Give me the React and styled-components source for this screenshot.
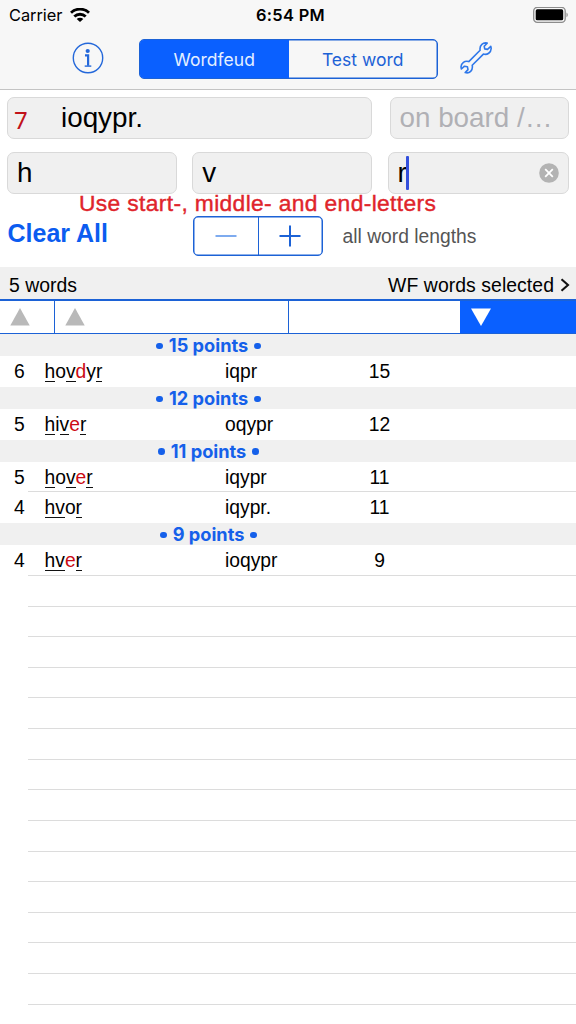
import React from "react";
import styled, { createGlobalStyle, css } from "styled-components";

const BLUE = "#0a60ff";
const LINE = "#1c62d6";

const GlobalStyle = createGlobalStyle`
  * { box-sizing: border-box; }
  body { margin: 0; background: #fff; }
`;

const Screen = styled.div`
  width: 576px;
  height: 1024px;
  overflow: hidden;
  display: flex;
  flex-direction: column;
  background: #fff;
  color: #000;
  font-family: "Liberation Sans", Arial, sans-serif;
  white-space: nowrap;
`;

const TopArea = styled.header`
  flex: none;
  height: 90px;
  background: #f7f7f7;
  border-bottom: 1px solid #c4c4c4;
`;

const StatusBar = styled.div`
  height: 30px;
  display: grid;
  grid-template-columns: 1fr auto 1fr;
  align-items: center;
  padding: 0 7px 0 9px;
  font-family: Inter, sans-serif;
  font-size: 16.4px;
`;

const Carrier = styled.div`
  display: flex;
  align-items: center;
  gap: 8px;
  letter-spacing: -0.05px;
`;

const Clock = styled.div`
  padding-left: 3px;
  font-weight: 600;
  letter-spacing: 0.3px;
`;

const BatterySlot = styled.div`
  display: flex;
  justify-content: flex-end;
`;

const NavBar = styled.div`
  display: flex;
  align-items: flex-start;
  padding: 9px 0 0 72px;
`;

const IconButton = styled.button`
  flex: none;
  width: 32px;
  height: 38px;
  padding: 0;
  border: 0;
  background: none;
  display: flex;
  align-items: center;
  justify-content: center;
`;

const Segments = styled.div`
  display: flex;
  width: 299px;
  height: 40px;
  margin: 0 22px 0 35px;
  border: 1px solid ${LINE};
  box-shadow: inset 0 0 0 0.5px ${LINE};
  border-radius: 5px;
  overflow: hidden;
`;

const Segment = styled.div`
  flex: 1;
  display: flex;
  align-items: center;
  justify-content: center;
  font-family: Inter, sans-serif;
  font-size: 17.5px;
  letter-spacing: 0.02px;
  color: ${(p) => (p.$active ? "#e4efff" : LINE)};
  background: ${(p) => (p.$active ? BLUE : "transparent")};
`;

const Form = styled.section`
  flex: none;
  display: flex;
  flex-direction: column;
  height: 177px;
  padding: 7px 7px 0;
`;

const FieldRow = styled.div`
  flex: none;
  display: grid;
  grid-template-columns: ${(p) => p.$columns};
  grid-template-rows: 42px;
  column-gap: ${(p) => p.$gap};
  height: 42px;
  margin-bottom: ${(p) => p.$after};
`;

const Field = styled.div`
  display: flex;
  align-items: center;
  height: 42px;
  padding: 0 9px;
  border: 1px solid #d9d9d9;
  border-radius: 7px;
  background: #f0f0f0;
  font-size: 27.8px;
  line-height: 40px;
  color: ${(p) => (p.$placeholder ? "#b0b0b5" : "#000")};
`;

const Count = styled.span`
  width: 47px;
  margin-left: -3px;
  padding-top: 4px;
  font-family: "Noto Sans", sans-serif;
  font-size: 24px;
  line-height: 36px;
  color: #c1121a;
`;

const Caret = styled.span`
  width: 2.5px;
  height: 34px;
  margin-left: -0.5px;
  border-radius: 1px;
  background: #3350dd;
`;

const ClearIcon = styled.svg`
  margin-left: auto;
`;

const Hint = styled.div`
  height: 22px;
  padding-left: 72px;
  line-height: 19px;
  font-size: 22.8px;
  letter-spacing: 0.36px;
  color: #e0242b;
  -webkit-text-stroke: 0.4px #e0242b;
`;

const LengthRow = styled.div`
  display: flex;
  height: 40px;
`;

const ClearAll = styled.button`
  width: 186px;
  height: 34px;
  padding: 0 0 0 0.5px;
  border: 0;
  background: none;
  text-align: left;
  font: bold 25px/34px "Liberation Sans", Arial, sans-serif;
  color: #0b5cf0;
`;

const Stepper = styled.div`
  display: flex;
  width: 130px;
  height: 40px;
  border: 1px solid ${LINE};
  box-shadow: inset 0 0 0 0.5px ${LINE};
  border-radius: 5px;
`;

const Step = styled.div`
  flex: 1;
  display: flex;
  align-items: center;
  justify-content: center;
  & + & { border-left: 1px solid ${LINE}; }
`;

const LengthLabel = styled.span`
  margin-left: 19.5px;
  line-height: 41px;
  font-size: 19.3px;
  color: #555;
`;

const Summary = styled.div`
  flex: none;
  display: flex;
  align-items: center;
  justify-content: space-between;
  height: 32px;
  padding: 4px 6px 0 9px;
  background: #f0f0f0;
  font-size: 19.4px;
`;

const Picker = styled.span`
  display: flex;
  align-items: center;
  gap: 6px;
  letter-spacing: 0.06px;
`;

const SortBar = styled.div`
  flex: none;
  display: grid;
  grid-template-columns: 55px 234px 171px 1fr;
  height: 35px;
  border-top: 2px solid ${LINE};
  border-bottom: 1px solid ${LINE};
`;

const SortCell = styled.div`
  display: flex;
  align-items: center;
  padding-left: ${(p) => p.$inset};
  border-right: ${(p) => (p.$divider ? `1.4px solid ${LINE}` : "0")};
  background: ${(p) => (p.$active ? BLUE : "#fff")};
`;

const Results = styled.main`
  flex: 1;
`;

const GroupHeader = styled.div`
  display: flex;
  justify-content: center;
  align-items: center;
  gap: 6px;
  height: 22.2px;
  padding-right: 159px;
  background: #f0f0f0;
  font: 700 18.2px/22px Inter, sans-serif;
  color: #1560ea;
`;

const Dot = styled.i`
  width: 6.5px;
  height: 6.5px;
  margin-top: 2px;
  border-radius: 50%;
  background: #1560ea;
`;

const rowBox = css`
  height: 30.63px;
  background-image: ${(p) => (p.$line ? "linear-gradient(#dcdcdc, #dcdcdc)" : "none")};
  background-repeat: no-repeat;
  background-size: 100% 1px;
  background-position: 28px 100%;
`;

const WordRow = styled.div`
  ${rowBox}
  display: grid;
  grid-template-columns: 44.5px 180.5px 134px 41px 1fr;
  line-height: 31px;
  font-size: 19.3px;
`;

const EmptyRow = styled.div`
  ${rowBox}
`;

const Length = styled.span`
  padding-left: 14px;
`;

const Points = styled.span`
  text-align: center;
`;

const Letter = styled.span`
  display: inline-block;
  line-height: 18px;
  border-bottom: ${(p) => (p.$fixed ? "1.4px solid #111" : "0")};
  color: ${(p) => (p.$wild ? "#cc0a14" : "inherit")};
`;

const groups = [
  { points: 15, words: [{ word: "hovdyr", fixed: [0, 2, 5], wild: 3, rest: "iqpr" }] },
  { points: 12, words: [{ word: "hiver", fixed: [0, 2, 4], wild: 3, rest: "oqypr" }] },
  {
    points: 11,
    words: [
      { word: "hover", fixed: [0, 2, 4], wild: 3, rest: "iqypr" },
      { word: "hvor", fixed: [0, 1, 3], wild: -1, rest: "iqypr." },
    ],
  },
  { points: 9, words: [{ word: "hver", fixed: [0, 1, 3], wild: 2, rest: "ioqypr" }] },
];

const Triangle = ({ down }) => (
  <svg width="20" height="18" viewBox="0 0 20 18">
    <path d={down ? "M0 0.5H20L10 18Z" : "M0.3 17.5H19.7L10 0Z"} fill={down ? "#fff" : "#b9b9b9"} />
  </svg>
);

const WifiIcon = () => (
  <svg width="20" height="15" viewBox="0 0 20 15" fill="none" stroke="#000" strokeWidth="2.8">
    <path d="M1 4.8a12.8 12.8 0 0 1 18 0" />
    <path d="M4.3 8.6a8.1 8.1 0 0 1 11.4 0" />
    <path d="M10 14 6.7 11a4.7 4.7 0 0 1 6.6 0Z" fill="#000" stroke="none" />
  </svg>
);

const BatteryIcon = () => (
  <svg width="36" height="17" viewBox="0 0 36 17">
    <rect x="0.7" y="0.3" width="31.5" height="15" rx="3.6" fill="none" stroke="#8c8c8c" strokeWidth="1.3" />
    <rect x="2.7" y="2.3" width="27.5" height="11" rx="1.6" />
    <path d="M33.5 5.5v4.8c1.7-.8 1.7-4 0-4.8Z" fill="#8c8c8c" />
  </svg>
);

const InfoIcon = () => (
  <svg width="32" height="32" viewBox="0 0 32 32" fill="none" stroke="#2468da">
    <circle cx="16" cy="16" r="14.7" strokeWidth="1.4" />
    <circle cx="15.7" cy="9" r="2.1" fill="#2468da" stroke="none" />
    <path d="M13 13.4h3.1v10.4" strokeWidth="2.2" />
    <path d="M12.7 24.1h6.6" strokeWidth="1.4" />
  </svg>
);

const WrenchIcon = () => (
  <svg width="32" height="32" viewBox="0 0 32 32" fill="none" stroke="#2f78ea" strokeWidth="1.6" strokeLinejoin="round" strokeLinecap="round">
    <path d="M12.2 23.2 23.4 12.1C27.3 13.3 31 10.5 31.2 6.5L30.8 4.300 27.5 7.4 24.7 6.9 24.2 4.2 27.2 1.1C23.2 0.2 19.3 3 20.1 8.2L8.8 19.6C4.6 18.3 1.2 21.1 1 24.9L1.4 27 4.5 24.2 7.4 24.7 8 27.6 5.2 30.6C9.4 31.8 13.3 28.6 12.2 23.2Z" />
  </svg>
);

const Word = ({ item }) => (
  <span>
    {[...item.word].map((ch, i) => (
      <Letter key={i} $fixed={item.fixed.includes(i)} $wild={item.wild === i}>
        {ch}
      </Letter>
    ))}
  </span>
);

export default function App() {
  return (
    <Screen>
      <GlobalStyle />
      <TopArea>
        <StatusBar>
          <Carrier>
            Carrier
            <WifiIcon />
          </Carrier>
          <Clock>6:54 PM</Clock>
          <BatterySlot>
            <BatteryIcon />
          </BatterySlot>
        </StatusBar>
        <NavBar>
          <IconButton aria-label="Info">
            <InfoIcon />
          </IconButton>
          <Segments>
            <Segment $active>Wordfeud</Segment>
            <Segment>Test word</Segment>
          </Segments>
          <IconButton aria-label="Settings">
            <WrenchIcon />
          </IconButton>
        </NavBar>
      </TopArea>

      <Form>
        <FieldRow $columns="364.5px 1fr" $gap="18px" $after="13px">
          <Field>
            <Count>7</Count>
            ioqypr.
          </Field>
          <Field $placeholder>on board /…</Field>
        </FieldRow>
        <FieldRow $columns="170px 180px 1fr" $gap="15.3px" $after="0">
          <Field>h</Field>
          <Field>v</Field>
          <Field>
            r
            <Caret />
            <ClearIcon width="20" height="20" viewBox="0 0 20 20">
              <circle cx="10" cy="10" r="9.8" fill="#b3b3b3" />
              <path d="M6.2 6.2l7.6 7.6M13.8 6.2l-7.6 7.6" stroke="#fff" strokeWidth="1.8" />
            </ClearIcon>
          </Field>
        </FieldRow>
        <Hint>Use start-, middle- and end-letters</Hint>
        <LengthRow>
          <ClearAll>Clear All</ClearAll>
          <Stepper>
            <Step>
              <svg width="22" height="22">
                <path d="M0.5 11h21" stroke="#7eabef" strokeWidth="2" />
              </svg>
            </Step>
            <Step>
              <svg width="22" height="22">
                <path d="M0.5 11h21M11 0.5v21" stroke={LINE} strokeWidth="2" />
              </svg>
            </Step>
          </Stepper>
          <LengthLabel>all word lengths</LengthLabel>
        </LengthRow>
      </Form>

      <Summary>
        <span>5 words</span>
        <Picker>
          WF words selected
          <svg width="10" height="14" viewBox="0 0 10 14" fill="none" stroke="#111" strokeWidth="2.1">
            <path d="M1.5 1.2 8 7l-6.5 5.8" />
          </svg>
        </Picker>
      </Summary>

      <SortBar>
        <SortCell $divider $inset="10px"><Triangle /></SortCell>
        <SortCell $divider $inset="10px"><Triangle /></SortCell>
        <SortCell $inset="0" />
        <SortCell $active $inset="11px"><Triangle down /></SortCell>
      </SortBar>

      <Results>
        {groups.map((g, gi) => (
          <React.Fragment key={g.points}>
            <GroupHeader>
              <Dot />
              {g.points} points
              <Dot />
            </GroupHeader>
            {g.words.map((w, i) => (
              <WordRow key={w.word} $line={i < g.words.length - 1 || gi === groups.length - 1}>
                <Length>{w.word.length}</Length>
                <Word item={w} />
                <span>{w.rest}</span>
                <Points>{g.points}</Points>
              </WordRow>
            ))}
          </React.Fragment>
        ))}
        {Array.from({ length: 14 }, (_, i) => (
          <EmptyRow key={i} $line />
        ))}
      </Results>
    </Screen>
  );
}
